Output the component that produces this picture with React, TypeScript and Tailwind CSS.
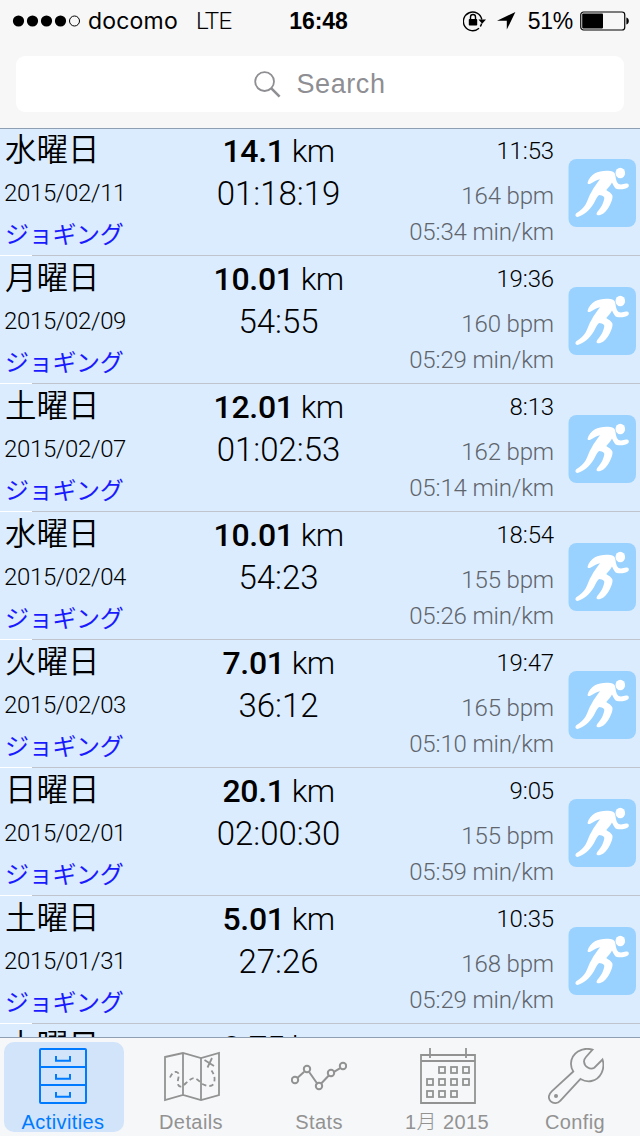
import React from 'react';
import clsx from 'clsx';

type Activity = {
  id: number;
  day: string;
  distance: string;
  time: string;
  date?: string;
  sport?: string;
  duration?: string;
  heartRate?: string;
  pace?: string;
};

const activities: Activity[] = [
  { id: 1, day: '水曜日', date: '2015/02/11', sport: 'ジョギング', distance: '14.1', duration: '01:18:19', time: '11:53', heartRate: '164', pace: '05:34' },
  { id: 2, day: '月曜日', date: '2015/02/09', sport: 'ジョギング', distance: '10.01', duration: '54:55', time: '19:36', heartRate: '160', pace: '05:29' },
  { id: 3, day: '土曜日', date: '2015/02/07', sport: 'ジョギング', distance: '12.01', duration: '01:02:53', time: '8:13', heartRate: '162', pace: '05:14' },
  { id: 4, day: '水曜日', date: '2015/02/04', sport: 'ジョギング', distance: '10.01', duration: '54:23', time: '18:54', heartRate: '155', pace: '05:26' },
  { id: 5, day: '火曜日', date: '2015/02/03', sport: 'ジョギング', distance: '7.01', duration: '36:12', time: '19:47', heartRate: '165', pace: '05:10' },
  { id: 6, day: '日曜日', date: '2015/02/01', sport: 'ジョギング', distance: '20.1', duration: '02:00:30', time: '9:05', heartRate: '155', pace: '05:59' },
  { id: 7, day: '土曜日', date: '2015/01/31', sport: 'ジョギング', distance: '5.01', duration: '27:26', time: '10:35', heartRate: '168', pace: '05:29' },
  { id: 8, day: '土曜日', distance: '8.75', time: '18:15' },
];

const StatusBar = () => (
  <div className="grid h-10 grid-cols-[1fr_auto_1fr] items-center pl-3 pr-[10px] pt-[2px] font-['Liberation_Sans','Noto_Sans_CJK_JP',sans-serif] text-[23px] leading-none text-black">
    <div className="flex items-center">
      <svg width="70" height="12" viewBox="0 0 70 12">
        {[6.5, 20.5, 34.5, 48.5].map((cx) => (
          <circle key={cx} cx={cx} cy="6" r="5.6" />
        ))}
        <circle cx="62.5" cy="6" r="5" fill="none" stroke="#000" />
      </svg>
      <span className="ml-[6px] font-['Inter',sans-serif] tracking-[0.2px]">docomo</span>
      <span className="ml-[18px] font-['Roboto',sans-serif] text-[24px] font-light tracking-[-0.6px]">LTE</span>
    </div>
    <span className="mr-[5px] font-bold tracking-[-0.1px]">16:48</span>
    <div className="flex items-center justify-end">
      <svg width="24" height="22" viewBox="0 0 24 22" fill="none" stroke="#000" strokeWidth="1.4">
        <path d="M16 18.2A9.300 9.300 0 1 1 18.800 9.500" />
        <path d="M15.400 9.400h7.600l-3.800 4.400z" fill="#000" stroke="none" />
        <path d="M18.600 13.500a9 9 0 0 1-1.300 3" />
        <rect x="5.800" y="9" width="8.400" height="6.600" rx="0.8" fill="#000" stroke="none" />
        <path d="M7.500 10V7a2.500 2.500 0 0 1 5 0v3" />
      </svg>
      <svg className="ml-[10px]" width="19" height="18" viewBox="0 0 19 18">
        <path d="M18.400 0 9.800 17.600V8.800H0z" />
      </svg>
      <span className="ml-[12px] tracking-[-0.3px]">51%</span>
      <svg className="ml-[7px]" width="50" height="20" viewBox="0 0 50 20">
        <rect x="0.75" y="1" width="44" height="18" rx="2.8" fill="none" stroke="#000" strokeWidth="1.2" />
        <rect x="2.2" y="2.6" width="20.8" height="14.8" rx="0.8" />
        <path d="M46.4 6.5c3.2.4 3.2 6.6 0 7z" />
      </svg>
    </div>
  </div>
);

const SearchBar = () => (
  <div className="mx-4 mt-4 flex h-14 items-center justify-center gap-[15px] rounded-[9px] bg-white text-[#8e8e93]">
    <svg width="27" height="27" viewBox="0 0 27 27" fill="none" stroke="#8e8e93">
      <circle cx="10.6" cy="10.6" r="9.4" strokeWidth="1.8" />
      <path d="m17.6 17.6 8 8" strokeWidth="2.6" />
    </svg>
    <span className="font-['Liberation_Sans',sans-serif] text-[27px] leading-none tracking-[0.6px]">Search</span>
  </div>
);

const RunnerIcon = () => (
  <svg width="68" height="68" viewBox="0 0 68 68">
    <rect x="0.5" width="67.5" height="68" rx="8" fill="#99d2ff" />
    <g fill="#fff">
      <ellipse cx="52.3" cy="14" rx="4.8" ry="5.2" />
      <path d="M19.6 23.4C20.6 20 23.5 16.5 27 14.3C31 12 40 10.9 45 12.7C47.2 13.8 47.3 15.8 47.6 18C48.1 21.3 48.8 23.8 50.6 25C53 26 55.5 25.1 58.2 24.6C60.4 24.3 61.6 26.2 60.4 28C59 29.6 55.2 30.3 52.2 30.3C49.6 30.2 47.8 30 46.8 28.4C45.6 26.8 44.8 25.2 44 23.5C42.7 26.4 40.2 28.8 38.3 31C40.3 32.6 43.4 34 44.3 36.2C45.4 39.4 42.2 46 39.6 50C37.5 53 34.2 56 31 56.3C28.2 56.4 28 55 29.4 52.8C31.2 50.4 33.6 47.7 34.6 45C35.4 42.8 36.6 40.2 36.2 38.3C35.2 36.6 32.6 36.4 31 36.1C28.6 38.3 27.6 41.4 25.9 44.2C23.6 48.2 20.7 51.2 18 53.5C15.4 55.4 12 57.6 9.6 57.9C7 57.8 6.9 55.5 8.6 54C12.2 51.8 15.4 48.8 17.6 45.4C20 41.6 20.9 36.6 23.6 32.8C25.6 28.6 29 24.4 32 20.300C28.400 20.700 25 23.600 21.800 25C20.100 25.200 19.400 24.600 19.600 23.400Z" />
    </g>
  </svg>
);

const ActivityRow = ({ activity }: { activity: Activity }) => (
  <li className="relative flex h-32 shrink-0 border-b border-[#bfc4cd] bg-[#dbecfe] font-['Roboto','Noto_Sans_CJK_JP',sans-serif] font-light text-black">
    <div className="flex w-[150px] flex-col pl-1">
      <span className="mt-[2px] pl-px font-['Noto_Sans_CJK_JP',sans-serif] text-[31.5px] font-[350] leading-[34px]">{activity.day}</span>
      {activity.date && <span className="mt-[15px] text-[24px] leading-[28px] tracking-[-0.35px]">{activity.date}</span>}
      {activity.sport && (
        <span className="mt-[12px] pl-px font-['Noto_Sans_CJK_JP',sans-serif] text-[24px] font-normal leading-[28px] tracking-[-0.3px] text-[#1a1aff]">
          {activity.sport}
        </span>
      )}
    </div>
    <div className="flex w-[258px] flex-col items-center pr-px">
      <span className="mt-[4px] whitespace-pre text-[32px] leading-[38px]">
        <span className="font-medium tracking-[-0.3px]">{activity.distance}</span>
        <span className="tracking-[-0.7px]"> km</span>
      </span>
      {activity.duration && <span className="mt-[5px] text-[33px] leading-[38px]">{activity.duration}</span>}
    </div>
    <div className="flex w-[146px] flex-col items-end text-[24px] leading-[28px] tracking-[-0.15px] text-[#5f656c]">
      <span className="mt-[9px] text-black">{activity.time}</span>
      {activity.heartRate && <span className="mt-[17px]">{activity.heartRate} bpm</span>}
      {activity.pace && <span className="mt-[8px] whitespace-nowrap">{activity.pace} min/km</span>}
    </div>
    <div className="ml-[14px] mt-[31px]">
      <RunnerIcon />
    </div>
    <span className="absolute -bottom-px left-0 h-px w-8 bg-white" />
  </li>
);

const DrawersIcon = () => (
  <svg className="mr-[2px] shrink-0" width="48" height="56" viewBox="0 0 48 56" fill="none" stroke="currentColor" strokeWidth="2">
    <rect x="1" y="1" width="46" height="54" rx="1" />
    <path d="M1 19h46M1 37h46M17 8v4.8h14V8M17 26v4.8h14V26M17 44v4.8h14V44" />
  </svg>
);

const MapIcon = () => (
  <svg className="shrink-0" width="56" height="56" viewBox="0 0 56 56" fill="none" stroke="currentColor" strokeWidth="1.8">
    <path d="M1 9 19 5l18 5 18-5v42l-18 5-18-5-18 5zM19 5v42M37 10v42" />
    <path d="M6 29.5C8 25 10 23.5 12.5 24c5 1.5 0 8 1.5 12.5 2 4 5 1.5 8-1.5 3-2.5 5.500-5 8-5 4 1 6 4.500 9.500 6.500 4 2 9 2.500 10.500-1.500 1.500-5 0-9-2.500-12.500" strokeDasharray="4.5 3" />
    <path d="m40.500 12 9.500 6M48 10l-4.500 9.500" />
  </svg>
);

const StatsIcon = () => (
  <svg className="mr-[2px] shrink-0" width="56" height="56" viewBox="0 0 56 56" fill="none" stroke="currentColor" strokeWidth="2">
    <path d="m6.6 29.8 6.6-6M18.3 24.3l8.400 12M30.2 35.5l7.600-8M43 23.8l6.200-3.600" />
    <circle cx="4" cy="32" r="3.2" />
    <circle cx="16" cy="21" r="3.2" />
    <circle cx="28" cy="38" r="3.2" />
    <circle cx="40" cy="25" r="3.2" />
    <circle cx="52" cy="18" r="3.2" />
  </svg>
);

const CalendarIcon = () => {
  const cells = [
    [19, 19], [31, 19], [43, 19],
    [7, 31], [19, 31], [31, 31], [43, 31],
    [7, 43], [19, 43], [31, 43],
  ];

  return (
    <svg className="shrink-0" width="56" height="56" viewBox="0 0 56 56" fill="none" stroke="currentColor" strokeWidth="1.8">
      <path d="M1 7h54v48H1zM1 13h54M10 0v10M46 0v10" />
      {cells.map(([x, y]) => (
        <rect key={`${x}-${y}`} x={x} y={y} width="6" height="6" />
      ))}
    </svg>
  );
};

const WrenchIcon = () => (
  <svg className="shrink-0" width="56" height="56" viewBox="0 0 56 56" fill="none" stroke="currentColor" strokeWidth="1.8">
    <path d="M44.5 1.7C34-1.5 23.3 5 23 15.5c-.1 3 .8 5.5 2.3 8L3.7 43.3c-3.7 3.5-3.6 7.5-1 10 2.7 2.5 7 2.3 9.5-.5L32.5 31c3.5 2 7 2.8 11 2 9-2 14-12 11-21.5l-8.2 8.2c-4.1 2.7-9.9-1-10.3-6.2-.1-2 .9-3.3 2-4.5z" />
    <circle cx="8" cy="48" r="2" fill="currentColor" stroke="none" />
  </svg>
);

const tabs = [
  { label: 'Activities', icon: DrawersIcon },
  { label: 'Details', icon: MapIcon },
  { label: 'Stats', icon: StatsIcon },
  { label: '1月 2015', icon: CalendarIcon },
  { label: 'Config', icon: WrenchIcon },
];

const TabBar = () => (
  <nav className="flex h-[99px] shrink-0 gap-2 border-t border-[#8f9fb3] bg-[#f5f7f9] pl-1 pt-1">
    {tabs.map(({ label, icon: Icon }, index) => (
      <button
        key={label}
        type="button"
        className={clsx(
          "flex h-[90px] w-[120px] flex-col items-center rounded-[10px] pt-[6px] font-['Liberation_Sans','Noto_Sans_CJK_JP',sans-serif] text-[20px] leading-[22px]",
          index === 0 ? 'bg-[#d1e4fa] text-[#007aff]' : 'text-[#929292]'
        )}
      >
        <Icon />
        <span className="mt-[7px] h-[22px] pr-[2px] font-light tracking-[0.4px]">{label}</span>
      </button>
    ))}
  </nav>
);

const App = () => {
  return (
    <div className="flex h-[1136px] w-[640px] flex-col overflow-hidden bg-[#f7f7f7]">
      <header className="relative z-10 h-32 shrink-0 bg-[#f7f7f7] shadow-[0_1px_0_#8f9fb3]">
        <StatusBar />
        <SearchBar />
      </header>
      <ul className="flex min-h-0 flex-1 flex-col overflow-hidden">
        {activities.map((activity) => (
          <ActivityRow key={activity.id} activity={activity} />
        ))}
      </ul>
      <TabBar />
    </div>
  );
};

export default App;
